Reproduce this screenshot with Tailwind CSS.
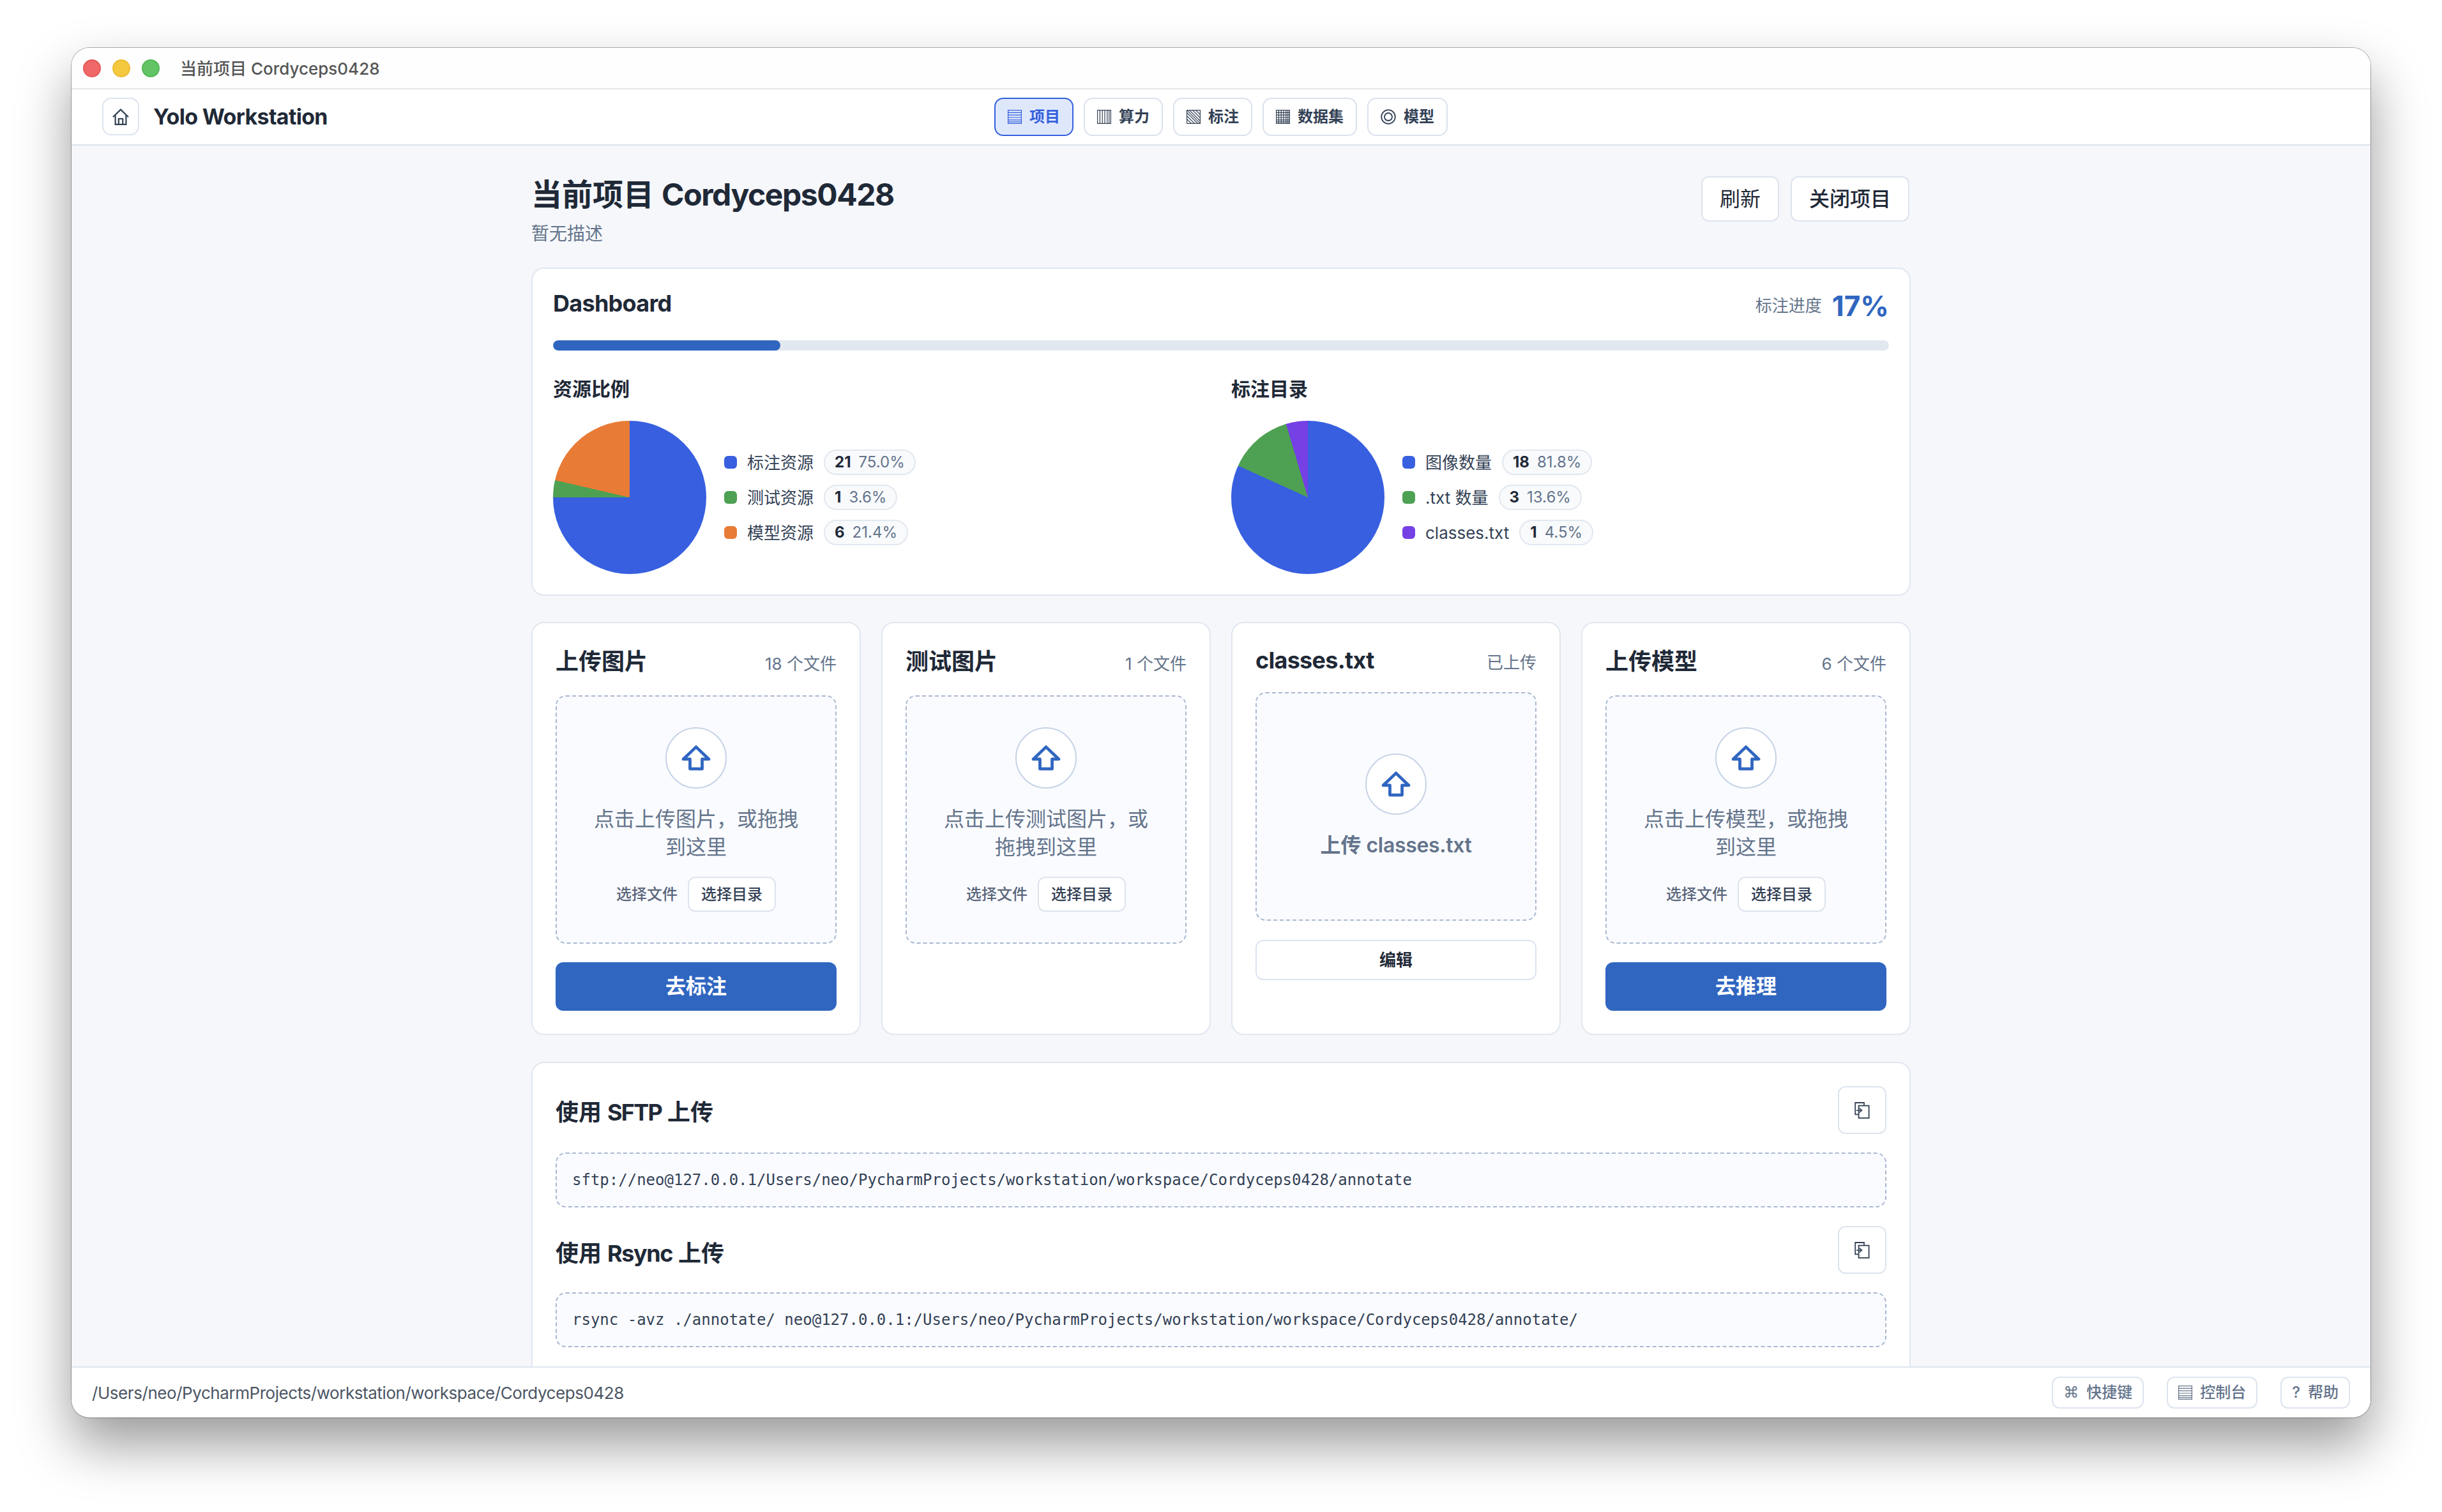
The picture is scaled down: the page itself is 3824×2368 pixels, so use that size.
<!DOCTYPE html>
<html lang="zh">
<head>
<meta charset="utf-8">
<title>Yolo Workstation</title>
<script src="https://cdn.jsdelivr.net/npm/@tailwindcss/browser@4"></script>
</head>
<body class="bg-white overflow-hidden">
<div class="w-[3824px] h-[2368px] pl-[112px] pt-[75px] [font-family:Inter,'Noto_Sans_CJK_SC',sans-serif]">
<div class="[zoom:2] w-[1800px] h-[1072.5px] flex flex-col rounded-[14px] overflow-hidden bg-white relative shadow-[0_21px_42px_rgba(0,0,0,0.4),0_0_0_0.5px_rgba(0,0,0,0.3)]">

  <!-- title bar -->
  <div class="h-[32.5px] shrink-0 flex items-center pl-[9px] border-b border-[#e6e6e6] bg-[#fefefe]">
    <div class="flex gap-[9px]">
      <span class="w-[14px] h-[14px] rounded-full bg-[#f06868] border border-[#e65a5a]"></span>
      <span class="w-[14px] h-[14px] rounded-full bg-[#f4c83f] border border-[#ecbd35]"></span>
      <span class="w-[14px] h-[14px] rounded-full bg-[#62c464] border border-[#55b858]"></span>
    </div>
    <span class="ml-4 mt-px text-[13px] leading-5 font-medium text-[#555555]">当前项目 Cordyceps0428</span>
  </div>

  <!-- nav -->
  <div class="h-11 shrink-0 relative flex items-center justify-center px-6 border-b border-[#dce3ec] bg-white">
    <div class="absolute left-6 top-[6.5px] flex items-center gap-[11px]">
      <button class="w-[29px] h-[29.5px] flex items-center justify-center rounded-[7px] border border-[#dde4ef] bg-white text-[#334155]">
        <svg width="14" height="13" viewBox="0 0 14 13" fill="none" stroke="currentColor" stroke-width="1.1"><path d="M1 6.6 7 .8l6 5.800"/><path d="M2.800 5.200v7.200h8.400V5.200"/><path d="M5.400 12.400V8h3.200v4.400"/></svg>
      </button>
      <span class="text-[17px] leading-6 font-bold tracking-[-0.02em] text-[#1f2937]">Yolo Workstation</span>
    </div>
    <div class="flex gap-2">
      <button class="h-[30px] px-[9.5px] flex items-center gap-1.5 rounded-[7px] border border-[#3560dd] bg-[#dfe8fb] text-[#3560dd] text-xs font-semibold">
        <svg width="11" height="11" viewBox="0 0 11 11" fill="none" stroke="currentColor" stroke-width=".6"><rect x=".3" y=".3" width="10.400" height="10.400"/><path d="M0 2.200h11M0 4.100h11M0 6h11M0 7.900h11M0 9.400h11"/></svg>
        项目
      </button>
      <button class="h-[30px] px-[9.5px] flex items-center gap-1.5 rounded-[7px] border border-[#dbe2ee] bg-white text-[#334155] text-xs font-semibold">
        <svg width="11" height="11" viewBox="0 0 11 11" fill="none" stroke="currentColor" stroke-width=".6"><rect x=".3" y=".3" width="10.400" height="10.400"/><path d="M2.200 0v11M4.100 0v11M6 0v11M7.900 0v11M9.400 0v11"/></svg>
        算力
      </button>
      <button class="h-[30px] px-[9.5px] flex items-center gap-1.5 rounded-[7px] border border-[#dbe2ee] bg-white text-[#334155] text-xs font-semibold">
        <svg width="11" height="11" viewBox="0 0 11 11" fill="none" stroke="currentColor" stroke-width=".6"><rect x=".3" y=".3" width="10.400" height="10.400"/><path d="M0 2 9 11M0 4.500 6.500 11M0 7 4 11M2 0l9 9M4.500 0 11 6.500M7 0l4 4M0 0l11 11"/></svg>
        标注
      </button>
      <button class="h-[30px] px-[9.5px] flex items-center gap-1.5 rounded-[7px] border border-[#dbe2ee] bg-white text-[#334155] text-xs font-semibold">
        <svg width="11" height="11" viewBox="0 0 11 11" fill="none" stroke="currentColor" stroke-width=".6"><rect x=".3" y=".3" width="10.400" height="10.400"/><path d="M0 2.200h11M0 4.100h11M0 6h11M0 7.900h11M0 9.400h11M2.200 0v11M4.100 0v11M6 0v11M7.900 0v11M9.400 0v11"/></svg>
        数据集
      </button>
      <button class="h-[30px] px-[9.5px] flex items-center gap-1.5 rounded-[7px] border border-[#dbe2ee] bg-white text-[#334155] text-xs font-semibold">
        <svg width="12" height="12" viewBox="0 0 12 12" fill="none" stroke="currentColor" stroke-width=".9"><circle cx="6" cy="6" r="5.400"/><circle cx="6" cy="6" r="3"/></svg>
        模型
      </button>
    </div>
  </div>

  <!-- main -->
  <div class="h-[956px] shrink-0 overflow-hidden bg-[#f5f7fb]">
    <div class="w-[1080px] mx-auto pt-6">

      <div class="flex justify-between items-start mb-[16.5px]">
        <div>
          <h1 class="text-2xl leading-[29px] font-semibold text-[#1f2937] mb-1.5">当前项目 <span class="font-bold tracking-[-0.03em]">Cordyceps0428</span></h1>
          <p class="text-sm leading-5 text-[#64748b]">暂无描述</p>
        </div>
        <div class="flex gap-[9px] mr-px">
          <button class="h-[35.5px] px-[13.5px] rounded-md border border-[#dde4ef] bg-white text-base text-[#1f2937]">刷新</button>
          <button class="h-[35.5px] px-[13.5px] rounded-md border border-[#dde4ef] bg-white text-base font-medium text-[#1f2937]">关闭项目</button>
        </div>
      </div>

      <!-- dashboard -->
      <section class="bg-white border border-[#e0e7f0] rounded-[10px] p-4 mb-[20.5px]">
        <div class="flex justify-between items-start h-[26px] mb-3.5">
          <h2 class="text-lg leading-[22px] font-bold tracking-[-0.02em] text-[#1f2937]">Dashboard</h2>
          <div class="flex items-center gap-2 leading-[26px]">
            <span class="text-[13px] text-[#64748b]">标注进度</span>
            <span class="text-[22px] font-bold text-[#3066c0]">17%</span>
          </div>
        </div>
        <div class="h-2 rounded-full bg-[#e2e8f0] overflow-hidden">
          <div class="h-full w-[17%] rounded-full bg-[#3066c0]"></div>
        </div>
        <div class="grid grid-cols-2 gap-4 mt-5">
          <div>
            <h3 class="text-[15px] leading-5 font-semibold text-[#1f2937] mb-[15px]">资源比例</h3>
            <div class="flex items-center gap-3.5">
              <div class="w-[120px] h-[120px] rounded-full bg-[conic-gradient(#375fe0_0_75%,#4ea153_0_78.6%,#e87b36_0)]"></div>
              <div class="flex flex-col gap-[7.5px]">
                <div class="flex items-center gap-2 h-5">
                  <span class="w-[10px] h-[10px] rounded-[3px] bg-[#375fe0]"></span>
                  <span class="text-[13px] text-[#334155]">标注资源</span>
                  <span class="h-5 px-[7.5px] flex items-center gap-1.5 rounded-full border border-[#e2e8f0] bg-[#f8fafc] text-xs"><b class="font-bold text-[#1f2937]">21</b><span class="text-[#64748b]">75.0%</span></span>
                </div>
                <div class="flex items-center gap-2 h-5">
                  <span class="w-[10px] h-[10px] rounded-[3px] bg-[#4ea153]"></span>
                  <span class="text-[13px] text-[#334155]">测试资源</span>
                  <span class="h-5 px-[7.5px] flex items-center gap-1.5 rounded-full border border-[#e2e8f0] bg-[#f8fafc] text-xs"><b class="font-bold text-[#1f2937]">1</b><span class="text-[#64748b]">3.6%</span></span>
                </div>
                <div class="flex items-center gap-2 h-5">
                  <span class="w-[10px] h-[10px] rounded-[3px] bg-[#e87b36]"></span>
                  <span class="text-[13px] text-[#334155]">模型资源</span>
                  <span class="h-5 px-[7.5px] flex items-center gap-1.5 rounded-full border border-[#e2e8f0] bg-[#f8fafc] text-xs"><b class="font-bold text-[#1f2937]">6</b><span class="text-[#64748b]">21.4%</span></span>
                </div>
              </div>
            </div>
          </div>
          <div>
            <h3 class="text-[15px] leading-5 font-semibold text-[#1f2937] mb-[15px]">标注目录</h3>
            <div class="flex items-center gap-3.5">
              <div class="w-[120px] h-[120px] rounded-full bg-[conic-gradient(#375fe0_0_81.8%,#4ea153_0_95.4%,#7540e4_0)]"></div>
              <div class="flex flex-col gap-[7.5px]">
                <div class="flex items-center gap-2 h-5">
                  <span class="w-[10px] h-[10px] rounded-[3px] bg-[#375fe0]"></span>
                  <span class="text-[13px] text-[#334155]">图像数量</span>
                  <span class="h-5 px-[7.5px] flex items-center gap-1.5 rounded-full border border-[#e2e8f0] bg-[#f8fafc] text-xs"><b class="font-bold text-[#1f2937]">18</b><span class="text-[#64748b]">81.8%</span></span>
                </div>
                <div class="flex items-center gap-2 h-5">
                  <span class="w-[10px] h-[10px] rounded-[3px] bg-[#4ea153]"></span>
                  <span class="text-[13px] text-[#334155]">.txt 数量</span>
                  <span class="h-5 px-[7.5px] flex items-center gap-1.5 rounded-full border border-[#e2e8f0] bg-[#f8fafc] text-xs"><b class="font-bold text-[#1f2937]">3</b><span class="text-[#64748b]">13.6%</span></span>
                </div>
                <div class="flex items-center gap-2 h-5">
                  <span class="w-[10px] h-[10px] rounded-[3px] bg-[#7540e4]"></span>
                  <span class="text-[13px] text-[#334155]">classes.txt</span>
                  <span class="h-5 px-[7.5px] flex items-center gap-1.5 rounded-full border border-[#e2e8f0] bg-[#f8fafc] text-xs"><b class="font-bold text-[#1f2937]">1</b><span class="text-[#64748b]">4.5%</span></span>
                </div>
              </div>
            </div>
          </div>
        </div>
      </section>

      <!-- upload cards -->
      <div class="grid grid-cols-4 gap-4 mb-[21px]">

        <section class="bg-white border border-[#e0e7f0] rounded-[10px] px-[18px] pt-[18px] pb-[18px]">
          <div class="flex justify-between items-center h-6 mb-[14.5px]">
            <h3 class="text-lg font-semibold text-[#1f2937]">上传图片</h3>
            <span class="text-[13px] mt-[3px] text-[#64748b]">18 个文件</span>
          </div>
          <div class="h-[194.5px] p-6 flex flex-col items-center rounded-lg border border-dashed border-[#a9b8d0] bg-[#fafbff]">
            <div class="w-12 h-12 shrink-0 flex items-center justify-center rounded-full border border-[#c6d3e6] bg-white text-[#3066c0]">
              <svg width="23" height="20" viewBox="0 0 24 21" fill="none" stroke="currentColor" stroke-width="2.500" stroke-linejoin="round"><path d="M12 1.500 22.500 11.500H17V19.500H7V11.500H1.500Z"/></svg>
            </div>
            <p class="mt-[13px] text-base leading-[22px] text-center text-[#64748b]">点击上传图片，或拖拽到这里</p>
            <div class="mt-3 flex items-center gap-2 text-xs">
              <span class="font-medium text-[#5b677c]">选择文件</span>
              <button class="h-[27.5px] w-[69px] rounded-md border border-[#dde4ef] bg-white font-medium text-[#334155]">选择目录</button>
            </div>
          </div>
          <button class="w-full h-[38px] mt-[14.5px] rounded-md bg-[#3066c0] text-white text-base font-semibold">去标注</button>
        </section>

        <section class="bg-white border border-[#e0e7f0] rounded-[10px] px-[18px] pt-[18px] pb-[18px]">
          <div class="flex justify-between items-center h-6 mb-[14.5px]">
            <h3 class="text-lg font-semibold text-[#1f2937]">测试图片</h3>
            <span class="text-[13px] mt-[3px] text-[#64748b]">1 个文件</span>
          </div>
          <div class="h-[194.5px] p-6 flex flex-col items-center rounded-lg border border-dashed border-[#a9b8d0] bg-[#fafbff]">
            <div class="w-12 h-12 shrink-0 flex items-center justify-center rounded-full border border-[#c6d3e6] bg-white text-[#3066c0]">
              <svg width="23" height="20" viewBox="0 0 24 21" fill="none" stroke="currentColor" stroke-width="2.500" stroke-linejoin="round"><path d="M12 1.500 22.500 11.500H17V19.500H7V11.500H1.500Z"/></svg>
            </div>
            <p class="mt-[13px] text-base leading-[22px] text-center text-[#64748b]">点击上传测试图片，或拖拽到这里</p>
            <div class="mt-3 flex items-center gap-2 text-xs">
              <span class="font-medium text-[#5b677c]">选择文件</span>
              <button class="h-[27.5px] w-[69px] rounded-md border border-[#dde4ef] bg-white font-medium text-[#334155]">选择目录</button>
            </div>
          </div>
        </section>

        <section class="bg-white border border-[#e0e7f0] rounded-[10px] px-[18px] pt-[18px] pb-[18px]">
          <div class="flex justify-between items-center h-[22px] mb-3.5">
            <h3 class="text-lg font-bold tracking-[-0.02em] text-[#1f2937]">classes.txt</h3>
            <span class="text-[13px] mt-[3px] text-[#64748b]">已上传</span>
          </div>
          <div class="h-[179px] flex flex-col items-center justify-center rounded-lg border border-dashed border-[#a9b8d0] bg-[#fafbff]">
            <div class="w-12 h-12 shrink-0 flex items-center justify-center rounded-full border border-[#c6d3e6] bg-white text-[#3066c0]">
              <svg width="23" height="20" viewBox="0 0 24 21" fill="none" stroke="currentColor" stroke-width="2.500" stroke-linejoin="round"><path d="M12 1.500 22.500 11.500H17V19.500H7V11.500H1.500Z"/></svg>
            </div>
            <p class="mt-[13px] text-base leading-[22px] font-semibold text-center text-[#64748b]">上传 <span class="tracking-[-0.01em]">classes.txt</span></p>
          </div>
          <button class="w-full h-[31.5px] mt-[15px] rounded-md border border-[#dde4ef] bg-white text-[13px] font-semibold text-[#1f2937]">编辑</button>
        </section>

        <section class="bg-white border border-[#e0e7f0] rounded-[10px] px-[18px] pt-[18px] pb-[18px]">
          <div class="flex justify-between items-center h-6 mb-[14.5px]">
            <h3 class="text-lg font-semibold text-[#1f2937]">上传模型</h3>
            <span class="text-[13px] mt-[3px] text-[#64748b]">6 个文件</span>
          </div>
          <div class="h-[194.5px] p-6 flex flex-col items-center rounded-lg border border-dashed border-[#a9b8d0] bg-[#fafbff]">
            <div class="w-12 h-12 shrink-0 flex items-center justify-center rounded-full border border-[#c6d3e6] bg-white text-[#3066c0]">
              <svg width="23" height="20" viewBox="0 0 24 21" fill="none" stroke="currentColor" stroke-width="2.500" stroke-linejoin="round"><path d="M12 1.500 22.500 11.500H17V19.500H7V11.500H1.500Z"/></svg>
            </div>
            <p class="mt-[13px] text-base leading-[22px] text-center text-[#64748b]">点击上传模型，或拖拽到这里</p>
            <div class="mt-3 flex items-center gap-2 text-xs">
              <span class="font-medium text-[#5b677c]">选择文件</span>
              <button class="h-[27.5px] w-[69px] rounded-md border border-[#dde4ef] bg-white font-medium text-[#334155]">选择目录</button>
            </div>
          </div>
          <button class="w-full h-[38px] mt-[14.5px] rounded-md bg-[#3066c0] text-white text-base font-semibold">去推理</button>
        </section>
      </div>

      <!-- transfer commands -->
      <section class="bg-white border border-[#e0e7f0] rounded-[10px] px-[18px] pt-[18px] pb-6">
        <div class="flex justify-between items-start h-[37.5px] mb-[14.5px]">
          <h3 class="text-lg leading-[37.5px] mt-0.5 font-semibold text-[#1f2937]">使用 <span class="font-bold tracking-[-0.05em]">SFTP</span> 上传</h3>
          <button class="w-[38px] h-[37.5px] flex items-center justify-center rounded-md border border-[#dde4ef] bg-white text-[#334155]">
            <svg width="12" height="13" viewBox="0 0 12 13" fill="none" stroke="currentColor" stroke-width=".9"><path d="M7.500 2.800V.5H.6v9.200h2.600"/><rect x="3.300" y="2.800" width="8" height="9.700"/><path d="M1.500 6.500h3.500M3.800 4.800l2 1.700-2 1.700" stroke-width=".8"/></svg>
          </button>
        </div>
        <div class="h-[43px] flex items-center px-3 mb-[14.5px] rounded-lg border border-dashed border-[#a9b8d0] bg-[#fafbff] [font-family:'DejaVu_Sans_Mono',monospace] text-xs text-[#334155]">sftp://neo@127.0.0.1/Users/neo/PycharmProjects/workstation/workspace/Cordyceps0428/annotate</div>
        <div class="flex justify-between items-start h-[37.5px] mb-[14.5px]">
          <h3 class="text-lg leading-[37.5px] mt-[3px] font-semibold text-[#1f2937]">使用 <span class="font-bold tracking-[-0.04em]">Rsync</span> 上传</h3>
          <button class="w-[38px] h-[37.5px] flex items-center justify-center rounded-md border border-[#dde4ef] bg-white text-[#334155]">
            <svg width="12" height="13" viewBox="0 0 12 13" fill="none" stroke="currentColor" stroke-width=".9"><path d="M7.500 2.800V.5H.6v9.200h2.600"/><rect x="3.300" y="2.800" width="8" height="9.700"/><path d="M1.500 6.500h3.500M3.800 4.800l2 1.700-2 1.700" stroke-width=".8"/></svg>
          </button>
        </div>
        <div class="h-[43px] flex items-center px-3 rounded-lg border border-dashed border-[#a9b8d0] bg-[#fafbff] [font-family:'DejaVu_Sans_Mono',monospace] text-xs text-[#334155]">rsync -avz ./annotate/ neo@127.0.0.1:/Users/neo/PycharmProjects/workstation/workspace/Cordyceps0428/annotate/</div>
      </section>
    </div>
  </div>

  <!-- footer -->
  <div class="h-10 shrink-0 flex items-center justify-between px-4 border-t border-[#e0e7f0] bg-white">
    <span class="text-[13px] tracking-[-0.017em] text-[#4b5563]">/Users/neo/PycharmProjects/workstation/workspace/Cordyceps0428</span>
    <div class="flex gap-[18px]">
      <button class="h-[25px] px-2 flex items-center gap-1.5 rounded-md border border-[#dde4ef] bg-white text-xs font-medium text-[#64748b]"><span class="[font-family:'DejaVu_Sans',sans-serif]">⌘</span>快捷键</button>
      <button class="h-[25px] px-2 flex items-center gap-1.5 rounded-md border border-[#dde4ef] bg-white text-xs font-medium text-[#64748b]">
        <svg width="11" height="11" viewBox="0 0 11 11" fill="none" stroke="currentColor" stroke-width=".6"><rect x=".3" y=".3" width="10.400" height="10.400"/><path d="M0 2.200h11M0 4.100h11M0 6h11M0 7.900h11M0 9.400h11"/></svg>
        控制台
      </button>
      <button class="h-[25px] px-2 flex items-center gap-1.5 rounded-md border border-[#dde4ef] bg-white text-xs font-medium text-[#64748b]">?<span>帮助</span></button>
    </div>
  </div>
</div>
</div>
</body>
</html>
